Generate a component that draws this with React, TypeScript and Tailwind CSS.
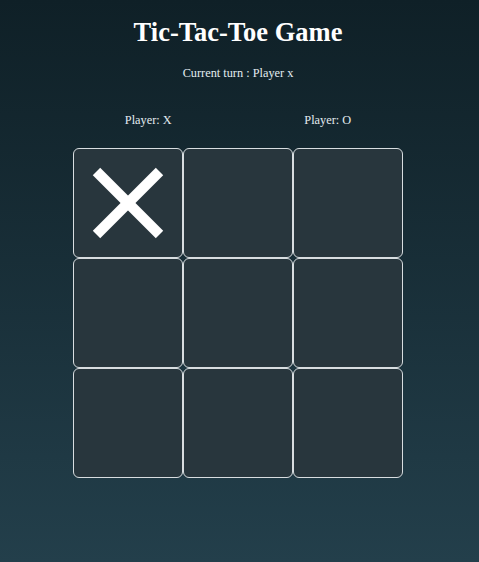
import React from 'react';

const board: (string | null)[] = ['X', null, null, null, null, null, null, null, null];

export default function App() {
  return (
    <div className="min-h-[562px] w-full bg-gradient-to-b from-[#0f2027] to-[#233f4b] font-['Liberation_Serif',serif] text-[#e3ecf0]">
      <div className="flex w-[476px] flex-col items-center pt-[17px]">
        <h1 className="text-[26.5px] leading-[30px] font-bold text-white">Tic-Tac-Toe Game</h1>
        <p className="mt-[18px] text-[12.3px] leading-[16px]">Current turn : Player x</p>
        <div className="mt-[31px] flex w-[359px] justify-around text-[12.3px] leading-[16px]">
          <span>Player: X</span>
          <span>Player: O</span>
        </div>
        <div className="mt-[20px] grid grid-cols-[repeat(3,110px)] grid-rows-[repeat(3,110px)]">
          {board.map((v, i) => (
            <div
              key={i}
              className="flex items-center justify-center rounded-[6px] border border-[#d8dde0] bg-[#28363d]"
            >
              {v === 'X' && (
                <svg width="72" height="72" viewBox="0 0 72 72">
                  <line x1="4.5" y1="4.5" x2="67.5" y2="67.5" stroke="white" strokeWidth="10.5" />
                  <line x1="67.5" y1="4.5" x2="4.5" y2="67.5" stroke="white" strokeWidth="10.5" />
                </svg>
              )}
            </div>
          ))}
        </div>
      </div>
    </div>
  );
}
